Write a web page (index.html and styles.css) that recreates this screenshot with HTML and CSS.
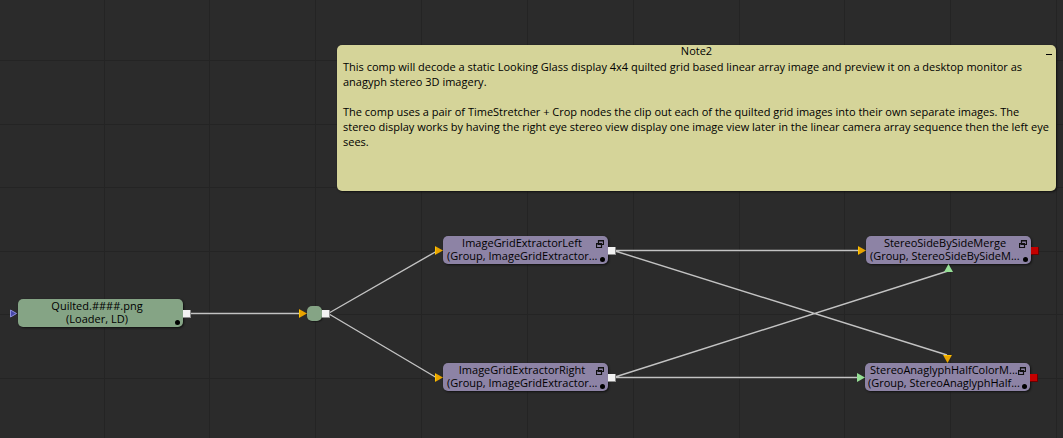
FILE: index.html
```
<!DOCTYPE html>
<html lang="en">
<head>
<meta charset="utf-8">
<title>Node flow</title>
<link rel="stylesheet" href="styles.css">
</head>
<body>
<main class="flow">
  <svg class="grid" aria-hidden="true">
    <path d="M104.5 0V2000M209.500 0V2000M315.500 0V2000M421.500 0V2000M527.500 0V2000M633.500 0V2000M739.500 0V2000M844.500 0V2000M950.500 0V2000M1056.500 0V2000"/>
    <path d="M0 60.500H4000M0 124.500H4000M0 187.500H4000M0 251.500H4000M0 314.500H4000M0 378.500H4000"/>
  </svg>
  <svg class="wires" aria-hidden="true">
    <path d="M190 313.500H300M329 313L437 251M329 314L437 378M615 250.500H859M615 377.500H858M615 251L947 355M615 377L948 271"/>
  </svg>

  <section class="note">
    <header class="note-head"><h1 class="note-title">Note2</h1><button class="note-fold" aria-label="Collapse note"></button></header>
    <p class="note-text">This comp will decode a static Looking Glass display 4x4 quilted grid based linear array image and preview it on a desktop monitor as anagyph stereo 3D imagery.</p>
    <p class="note-text">The comp uses a pair of TimeStretcher + Crop nodes the clip out each of the quilted grid images into their own separate images. The stereo display works by having the right eye stereo view display one image view later in the linear camera array sequence then the left eye sees.</p>
  </section>

  <article class="node loader">
    <span class="name">Quilted.####.png</span><span class="kind">(Loader, LD)</span><i class="dot"></i>
  </article>
  <div class="router"></div>
  <article class="node group left">
    <span class="name">ImageGridExtractorLeft</span><span class="kind">(Group, ImageGridExtractor...</span>
    <svg class="stack" viewBox="0 0 8 8"><path d="M2.500 .5H7.500V4.500H2.500ZM2 1H8M.5 3.500H5.500V7.500H.5ZM0 4H6"/></svg><i class="dot"></i>
  </article>
  <article class="node group right">
    <span class="name">ImageGridExtractorRight</span><span class="kind">(Group, ImageGridExtractor...</span>
    <svg class="stack" viewBox="0 0 8 8"><path d="M2.500 .5H7.500V4.500H2.500ZM2 1H8M.5 3.500H5.500V7.500H.5ZM0 4H6"/></svg><i class="dot"></i>
  </article>
  <article class="node group merge">
    <span class="name">StereoSideBySideMerge</span><span class="kind">(Group, StereoSideBySideM...</span>
    <svg class="stack" viewBox="0 0 8 8"><path d="M2.500 .5H7.500V4.500H2.500ZM2 1H8M.5 3.500H5.500V7.500H.5ZM0 4H6"/></svg><i class="dot"></i>
  </article>
  <article class="node group anaglyph">
    <span class="name">StereoAnaglyphHalfColorM...</span><span class="kind">(Group, StereoAnaglyphHalf...</span>
    <svg class="stack" viewBox="0 0 8 8"><path d="M2.500 .5H7.500V4.500H2.500ZM2 1H8M.5 3.500H5.500V7.500H.5ZM0 4H6"/></svg><i class="dot"></i>
  </article>

  <svg class="ports" aria-hidden="true">
    <g class="in-blue"><path d="M10.500 310L16.500 313.500L10.500 317Z"/></g>
    <g class="in-gold">
      <path d="M299 309L307 313.500L299 318Z"/>
      <path d="M435 246L443 250.500L435 255Z"/>
      <path d="M435 373L443 377.500L435 382Z"/>
      <path d="M858 246L866 250.500L858 255Z"/>
      <path d="M943 355H952L947.500 363Z"/>
    </g>
    <g class="in-green">
      <path d="M857 373L865 377.500L857 382Z"/>
      <path d="M944 272H953L948.500 264Z"/>
    </g>
    <g class="edge"><path d="M299.500 310V317M435.500 247V254M435.500 374V381M858.500 247V254M944 355.500H951"/></g>
    <g class="shade"><path d="M183 310h8v8h-8zM322 310h8v8h-8zM608 247h8v8h-8zM608 374h8v8h-8z"/></g>
    <g class="out"><path d="M183 310h7v7h-7zM322 310h7v7h-7zM608 247h7v7h-7zM608 374h7v7h-7z"/></g>
    <g class="open-shade"><path d="M1031 247h8v8h-8zM1030 374h8v8h-8z"/></g>
    <g class="out-open"><path d="M1031 247h7v7h-7zM1030 374h7v7h-7z"/></g>
  </svg>
</main>
</body>
</html>
```
FILE: styles.css
```
body {
  margin: 0;
  background: #2b2b2b;
  color: #000;
  font: 11px/15px "Open Sans", "Noto Sans", sans-serif;
}
.flow {
  position: relative;
  min-height: 100vh;
  overflow: hidden;
}
.grid, .wires, .ports {
  position: absolute;
  inset: 0;
  width: 100%;
  height: 100%;
}
.grid { stroke: #242424; }
.wires { fill: none; stroke: #c3c3c3; stroke-width: 1.4; }

.note {
  position: absolute;
  left: 337px;
  top: 45px;
  right: 7px;
  min-height: 146px;
  box-sizing: border-box;
  padding: 0 6px;
  border-radius: 5px;
  background: #d5d499;
  box-shadow: 1px 1px 2px #111;
}
.note-head { height: 14px; }
.note-title {
  margin: 0;
  text-align: center;
  font-size: 11px;
  font-weight: 400;
  line-height: 12px;
}
.note-fold {
  position: absolute;
  right: 4px;
  top: 3px;
  width: 6px;
  height: 7px;
  padding: 0;
  border: 0;
  border-bottom: 1px solid #000;
  background: none;
}
.note-text { margin: 0 0 15px; }

.node {
  position: absolute;
  display: flex;
  flex-direction: column;
  align-items: center;
  box-sizing: border-box;
  width: 165px;
  padding: 0 7px 2px 0;
  border-radius: 5px;
  box-shadow: 1px 1px 2px #111;
  line-height: 13px;
  white-space: nowrap;
}
.loader, .router { background: #85a485; }
.group { background: #8d83a5; }
.group .kind { align-self: flex-start; padding-left: 4px; }
.loader { left: 18px; top: 299px; }
.left { left: 443px; top: 236px; }
.right { left: 443px; top: 363px; }
.merge { left: 866px; top: 236px; }
.anaglyph { left: 865px; top: 363px; }
.anaglyph .kind { padding-left: 3px; }
.anaglyph .name { align-self: flex-start; padding-left: 5px; }
.router {
  position: absolute;
  left: 307px;
  top: 306px;
  width: 15px;
  height: 15px;
  border-radius: 5px;
  box-shadow: 1px 1px 1px #1a1a1a;
}
.dot {
  position: absolute;
  right: 3px;
  bottom: 2px;
  width: 5px;
  height: 5px;
  border-radius: 50%;
  background: #000;
}
.stack {
  position: absolute;
  right: 4px;
  top: 4px;
  width: 8px;
  height: 8px;
  fill: #8d83a5;
  stroke: #111;
  stroke-width: 1.2;
}
.in-blue { fill: #4747a8; stroke: #8d8ddd; }
.in-gold { fill: #e8a400; }
.edge { stroke: #ffc400; }
.in-green { fill: #96e096; }
.shade { fill: #8c8c8c; }
.out { fill: #f2f2f2; }
.open-shade { fill: #6a0000; }
.out-open { fill: #c40000; }
```
